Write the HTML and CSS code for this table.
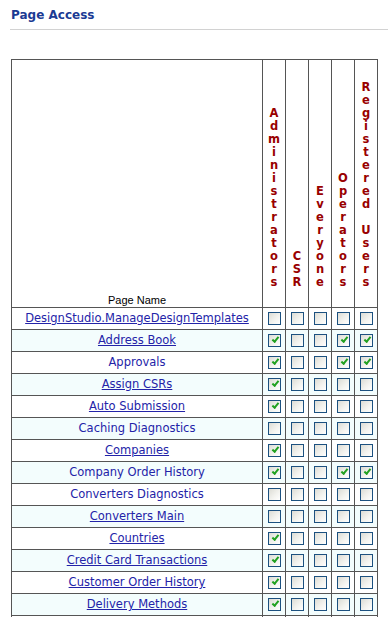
FILE: index.html
```html
<!DOCTYPE html>
<html>
<head>
<meta charset="utf-8">
<title>Page Access</title>
<link rel="stylesheet" href="styles.css">
</head>
<body>
<div class="page">
  <h2 class="title">Page Access</h2>
  <div class="rule"></div>
  <table class="access">
    <colgroup>
      <col class="c-name"><col class="c-role"><col class="c-role"><col class="c-role"><col class="c-role"><col class="c-role">
    </colgroup>
    <thead>
      <tr class="head">
        <th class="name">Page Name</th>
        <th class="role">A<br>d<br>m<br>i<br>n<br>i<br>s<br>t<br>r<br>a<br>t<br>o<br>r<br>s</th>
        <th class="role">C<br>S<br>R</th>
        <th class="role">E<br>v<br>e<br>r<br>y<br>o<br>n<br>e</th>
        <th class="role">O<br>p<br>e<br>r<br>a<br>t<br>o<br>r<br>s</th>
        <th class="role">R<br>e<br>g<br>i<br>s<br>t<br>e<br>r<br>e<br>d<br>&nbsp;<br>U<br>s<br>e<br>r<br>s</th>
      </tr>
    </thead>
    <tbody>
      <tr><td class="pg"><a href="#">DesignStudio.ManageDesignTemplates</a></td><td><span class="cb"></span></td><td><span class="cb"></span></td><td><span class="cb"></span></td><td><span class="cb"></span></td><td><span class="cb"></span></td></tr>
      <tr class="alt"><td class="pg"><a href="#">Address Book</a></td><td><span class="cb on"></span></td><td><span class="cb"></span></td><td><span class="cb"></span></td><td><span class="cb on"></span></td><td><span class="cb on"></span></td></tr>
      <tr><td class="pg"><span class="plain">Approvals</span></td><td><span class="cb on"></span></td><td><span class="cb"></span></td><td><span class="cb"></span></td><td><span class="cb on"></span></td><td><span class="cb on"></span></td></tr>
      <tr class="alt"><td class="pg"><a href="#">Assign CSRs</a></td><td><span class="cb on"></span></td><td><span class="cb"></span></td><td><span class="cb"></span></td><td><span class="cb"></span></td><td><span class="cb"></span></td></tr>
      <tr><td class="pg"><a href="#">Auto Submission</a></td><td><span class="cb on"></span></td><td><span class="cb"></span></td><td><span class="cb"></span></td><td><span class="cb"></span></td><td><span class="cb"></span></td></tr>
      <tr class="alt"><td class="pg"><span class="plain">Caching Diagnostics</span></td><td><span class="cb"></span></td><td><span class="cb"></span></td><td><span class="cb"></span></td><td><span class="cb"></span></td><td><span class="cb"></span></td></tr>
      <tr><td class="pg"><a href="#">Companies</a></td><td><span class="cb on"></span></td><td><span class="cb"></span></td><td><span class="cb"></span></td><td><span class="cb"></span></td><td><span class="cb"></span></td></tr>
      <tr class="alt"><td class="pg"><span class="plain">Company Order History</span></td><td><span class="cb on"></span></td><td><span class="cb"></span></td><td><span class="cb"></span></td><td><span class="cb on"></span></td><td><span class="cb on"></span></td></tr>
      <tr><td class="pg"><span class="plain">Converters Diagnostics</span></td><td><span class="cb"></span></td><td><span class="cb"></span></td><td><span class="cb"></span></td><td><span class="cb"></span></td><td><span class="cb"></span></td></tr>
      <tr class="alt"><td class="pg"><a href="#">Converters Main</a></td><td><span class="cb"></span></td><td><span class="cb"></span></td><td><span class="cb"></span></td><td><span class="cb"></span></td><td><span class="cb"></span></td></tr>
      <tr><td class="pg"><a href="#">Countries</a></td><td><span class="cb on"></span></td><td><span class="cb"></span></td><td><span class="cb"></span></td><td><span class="cb"></span></td><td><span class="cb"></span></td></tr>
      <tr class="alt"><td class="pg"><a href="#">Credit Card Transactions</a></td><td><span class="cb on"></span></td><td><span class="cb"></span></td><td><span class="cb"></span></td><td><span class="cb"></span></td><td><span class="cb"></span></td></tr>
      <tr><td class="pg"><a href="#">Customer Order History</a></td><td><span class="cb on"></span></td><td><span class="cb"></span></td><td><span class="cb"></span></td><td><span class="cb"></span></td><td><span class="cb"></span></td></tr>
      <tr class="alt"><td class="pg"><a href="#">Delivery Methods</a></td><td><span class="cb on"></span></td><td><span class="cb"></span></td><td><span class="cb"></span></td><td><span class="cb"></span></td><td><span class="cb"></span></td></tr>
      <tr><td class="pg"><a href="#">Departments</a></td><td><span class="cb on"></span></td><td><span class="cb"></span></td><td><span class="cb"></span></td><td><span class="cb"></span></td><td><span class="cb"></span></td></tr>
    </tbody>
  </table>
</div>
</body>
</html>
```
FILE: styles.css
```css
html, body {
  margin: 0;
  background: #fff;
}
body {
  font-family: "DejaVu Sans", Verdana, sans-serif;
  font-size: 11.5px;
}
.page {
  padding: 8px 0 0 10px;
}
.title {
  margin: 0 0 0 1px;
  font-size: 12px;
  line-height: 14px;
  font-weight: bold;
  color: #1b3a93;
  padding-bottom: 7px;
}
.rule {
  height: 1px;
  background: #d2d2d2;
  margin-bottom: 29px;
}
.access {
  border-collapse: collapse;
  table-layout: fixed;
  width: 367px;
  margin-left: 1px;
}
.c-name { width: 251px; }
.c-role { width: 23px; }
.access th,
.access td {
  border: 1px solid #555;
  padding: 0;
  text-align: center;
}
.head th {
  height: 229px;
  vertical-align: bottom;
}
.name {
  font-family: "Liberation Sans", Arial, sans-serif;
  font-weight: normal;
  font-size: 11px;
  color: #000;
  padding-bottom: 1px;
  line-height: 13px;
}
.role {
  color: #990000;
  font-weight: bold;
  font-size: 11.5px;
  line-height: 13px;
  padding-bottom: 18px !important;
}
.access tbody td {
  height: 21px;
  line-height: 13px;
  vertical-align: middle;
}
.access tbody tr.alt td {
  background: #f3fdfd;
}
.pg a,
.pg .plain {
  color: #2323a8;
}
.pg a {
  text-decoration: underline;
}
.cb {
  display: inline-block;
  position: relative;
  width: 11px;
  height: 11px;
  border: 1px solid #1c5180;
  background: linear-gradient(135deg, #dcdcd5 0%, #f2f2ee 55%, #ffffff 100%);
  vertical-align: middle;
  margin-top: -1px;
}
.cb.on::after {
  content: "";
  position: absolute;
  left: 3px;
  top: 2px;
  width: 5px;
  height: 2px;
  border-left: 2px solid #21a121;
  border-bottom: 2px solid #21a121;
  transform: rotate(-50deg);
}
```
